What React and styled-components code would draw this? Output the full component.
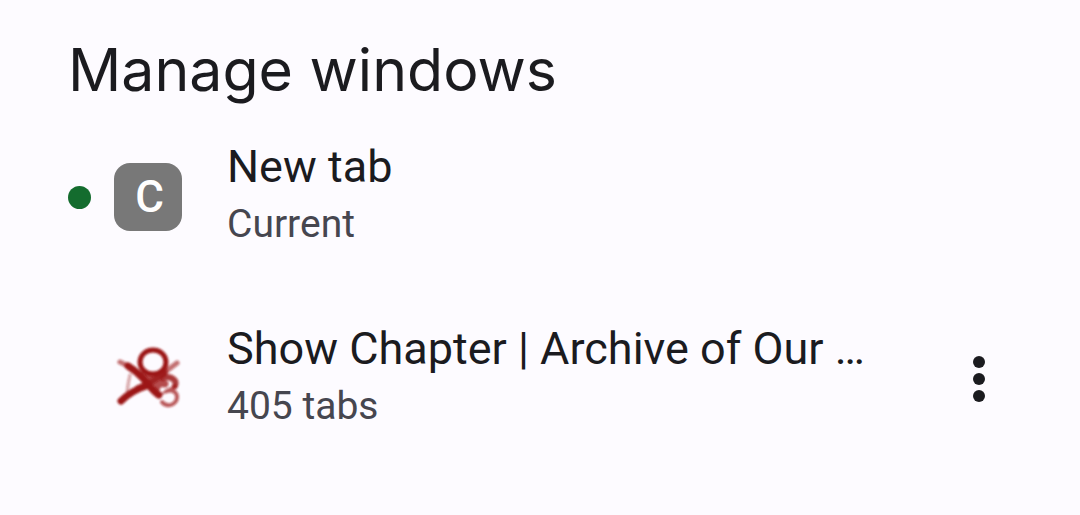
import React from "react";
import styled, { createGlobalStyle } from "styled-components";

const GlobalStyle = createGlobalStyle`
  * { box-sizing: border-box; }
  body {
    margin: 0;
    background: #fdfbff;
    color: #1b1b1f;
    font-family: Roboto, sans-serif;
  }
`;

const Dialog = styled.main`
  padding: 34px 34px 44px 68px;
`;

const Title = styled.h1`
  margin: 0;
  font-family: Inter, sans-serif;
  font-size: 59px;
  line-height: 72px;
  font-weight: 400;
`;

const WindowList = styled.ul`
  list-style: none;
  margin: 0;
  padding: 0;
`;

const WindowRow = styled.li`
  display: flex;
  align-items: center;
  height: 182px;
`;

const CurrentDot = styled.span`
  flex: none;
  width: 23px;
  height: 23px;
  margin-right: 23px;
  border-radius: 50%;
  background: ${(p) => (p.$active ? "#146c2e" : "transparent")};
`;

const Favicon = styled.span`
  flex: none;
  display: flex;
  align-items: center;
  justify-content: center;
  width: 68px;
  height: 68px;
  margin-right: 45px;
  padding-left: 3px;
  border-radius: 16px;
  background: #787878;
  color: #fff;
  font-size: 44px;
  line-height: 68px;
  font-weight: 500;
`;

const ArchiveLogo = styled.svg`
  flex: none;
  width: 68px;
  height: 68px;
  margin-right: 45px;
`;

const Details = styled.div`
  flex: 1;
  min-width: 0;
  margin-right: 34px;
  padding-bottom: 3px;
`;

const Name = styled.div`
  overflow: hidden;
  white-space: nowrap;
  text-overflow: ellipsis;
  font-size: 45px;
  line-height: 58px;
`;

const Status = styled.div`
  color: #46464f;
  font-size: 39px;
  line-height: 57px;
`;

const MenuButton = styled.button`
  flex: none;
  display: flex;
  align-items: center;
  justify-content: center;
  width: 135px;
  height: 135px;
  padding: 0;
  border: 0;
  background: none;
  color: #1b1b1f;
`;

function ArchiveIcon() {
  return (
    <ArchiveLogo viewBox="0 -1 68 68" role="img" aria-label="Archive of Our Own">
      <defs>
        <filter id="soft" x="-10%" y="-10%" width="120%" height="120%">
          <feGaussianBlur stdDeviation="1.2" />
        </filter>
      </defs>
      <g fill="none" stroke="#9c1414" strokeLinecap="round" filter="url(#soft)">
        <ellipse cx="39" cy="16" rx="13" ry="12" strokeWidth="5" />
        <path d="M6 16 L14 20" strokeWidth="5" opacity="0.6" />
        <path d="M14 20 Q25 27 33 37 T45 49" strokeWidth="7" />
        <path d="M63 17 L51 26" strokeWidth="5" opacity="0.6" />
        <path d="M51 26 Q40 36 24 42" strokeWidth="6" opacity="0.8" />
        <path d="M7 55 Q17 45 32 40" strokeWidth="7" />
        <path d="M16 29 Q14 37 13 47" strokeWidth="3" opacity="0.4" />
        <path d="M30 28 Q39 34 49 28 M34 34 L51 38 M41 45 L46 36" strokeWidth="7" opacity="0.75" />
        <path d="M49 32 C57 29 64 35 61 40" strokeWidth="6" opacity="0.85" />
        <path d="M61 40 C59 44 55 43 53 45 C61 43 65 49 62 55 C58 61 51 60 48 56" strokeWidth="4" opacity="0.7" />
      </g>
    </ArchiveLogo>
  );
}

export default function App() {
  return (
    <>
      <GlobalStyle />
      <Dialog>
        <Title>Manage windows</Title>
        <WindowList>
          <WindowRow>
            <CurrentDot $active />
            <Favicon>C</Favicon>
            <Details>
              <Name>New tab</Name>
              <Status>Current</Status>
            </Details>
          </WindowRow>
          <WindowRow>
            <CurrentDot />
            <ArchiveIcon />
            <Details>
              <Name>Show Chapter | Archive of Our Own</Name>
              <Status>405 tabs</Status>
            </Details>
            <MenuButton type="button" aria-label="More options">
              <svg width="12" height="46" viewBox="0 0 12 46" fill="currentColor" aria-hidden="true">
                <circle cx="6" cy="6" r="6" />
                <circle cx="6" cy="23" r="6" />
                <circle cx="6" cy="40" r="6" />
              </svg>
            </MenuButton>
          </WindowRow>
        </WindowList>
      </Dialog>
    </>
  );
}
